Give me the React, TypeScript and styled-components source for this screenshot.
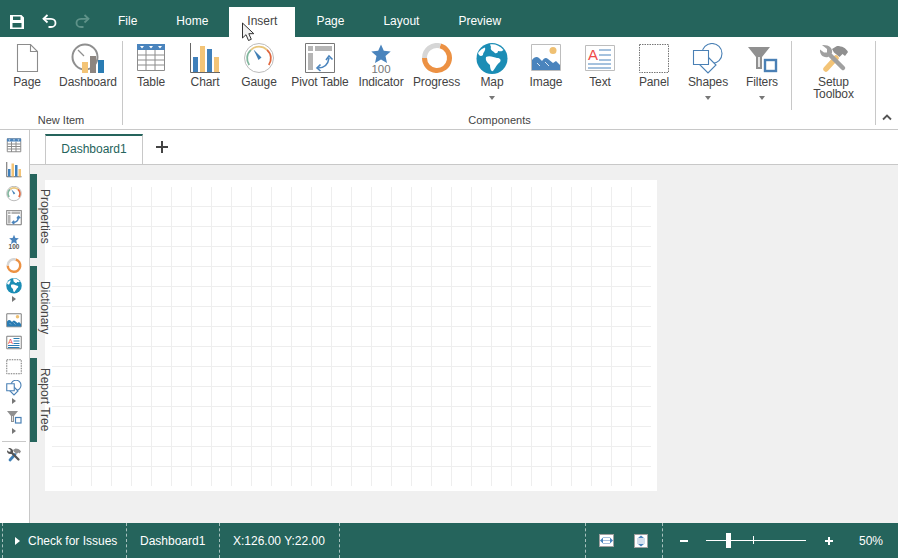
import React from 'react'
import styled, { createGlobalStyle } from 'styled-components'

const teal = '#25645c'
const ink = '#444444'
const line = '#c8c8c8'
const blue = '#4a84bd'
const amber = '#f3c477'

const GlobalStyle = createGlobalStyle`
  html, body, #root {
    margin: 0;
    height: 100%;
  }
  body {
    font-family: "Liberation Sans", Arial, sans-serif;
    font-size: 12px;
    color: ${ink};
    background: #fff;
    overflow: hidden;
  }
`

const Shell = styled.div`
  position: relative;
  display: flex;
  flex-direction: column;
  height: 558px;
  width: 898px;
`

/* title bar */
const TopBar = styled.header`
  display: flex;
  align-items: flex-end;
  height: 37px;
  background: ${teal};
  flex: none;
`
const QuickButton = styled.div`
  display: flex;
  align-items: center;
  justify-content: center;
  width: 33px;
  height: 30px;
  padding-bottom: 1px;
  box-sizing: border-box;
`
const Tabs = styled.nav`
  display: flex;
  gap: 3px;
  margin-left: 1px;
`
const TopTab = styled.div<{ $active?: boolean }>`
  height: 30px;
  line-height: 28px;
  padding: 0 18px;
  color: ${({ $active }) => ($active ? ink : '#fff')};
  background: ${({ $active }) => ($active ? '#fff' : 'transparent')};
`

/* ribbon */
const Ribbon = styled.section`
  display: flex;
  height: 93px;
  box-sizing: border-box;
  padding-top: 4px;
  border-bottom: 1px solid ${line};
  flex: none;
`
const Group = styled.div<{ $width: number; $inset?: number }>`
  width: ${({ $width }) => $width}px;
  height: 84px;
  box-sizing: border-box;
  padding-left: ${({ $inset }) => $inset ?? 0}px;
  border-right: 1px solid ${line};
  flex: none;
`
const GroupRow = styled.div`
  display: flex;
  height: 69px;
`
const GroupLabel = styled.div`
  margin-top: 4px;
  font-size: 11px;
  line-height: 12px;
  text-align: center;
`
const RibbonButton = styled.div<{ $width: number }>`
  display: flex;
  flex-direction: column;
  align-items: center;
  width: ${({ $width }) => $width}px;
  padding-top: 2px;
  box-sizing: border-box;
  flex: none;
`
const ButtonLabel = styled.div`
  margin-top: 1px;
  line-height: 12px;
  letter-spacing: -0.1px;
  text-align: center;
  white-space: nowrap;
`
const DownArrow = styled.div`
  margin-top: 8px;
  border-left: 3.5px solid transparent;
  border-right: 3.5px solid transparent;
  border-top: 4px solid #777;
`
const RowDivider = styled.div`
  width: 1px;
  margin-left: 2px;
  background: ${line};
  flex: none;
`
const Collapse = styled.div`
  flex: 1;
  display: flex;
  align-items: flex-end;
  justify-content: center;
  height: 84px;
  padding-bottom: 4px;
  box-sizing: border-box;
`

/* body */
const Body = styled.div`
  display: flex;
  flex: 1;
  min-height: 0;
`
const ToolBar = styled.aside`
  width: 30px;
  box-sizing: border-box;
  padding: 4px 1px 0 0;
  border-right: 1px solid ${line};
  display: flex;
  flex-direction: column;
  align-items: center;
  flex: none;
`
const ToolItem = styled.div<{ $h: number; $mt?: number }>`
  display: flex;
  align-items: center;
  justify-content: center;
  height: ${({ $h }) => $h}px;
  margin-top: ${({ $mt }) => $mt ?? 0}px;
  flex: none;
`
const SideArrow = styled.div`
  border-top: 3.5px solid transparent;
  border-bottom: 3.5px solid transparent;
  border-left: 4px solid #777;
`
const ToolDivider = styled.div`
  align-self: stretch;
  height: 1px;
  margin: 5px 2px;
  background: ${line};
`
const Workspace = styled.main`
  flex: 1;
  display: flex;
  flex-direction: column;
  min-width: 0;
`
const SheetBar = styled.div`
  display: flex;
  align-items: flex-end;
  height: 35px;
  box-sizing: border-box;
  padding-left: 15px;
  border-bottom: 1px solid ${line};
  flex: none;
`
const SheetTab = styled.div`
  width: 98px;
  height: 30px;
  box-sizing: border-box;
  border-top: 2px solid ${teal};
  border-left: 1px solid ${line};
  border-right: 1px solid ${line};
  color: ${teal};
  text-align: center;
  line-height: 26px;
`
const AddSheet = styled.div`
  display: flex;
  align-items: center;
  justify-content: center;
  width: 38px;
  height: 30px;
  padding-bottom: 4px;
  box-sizing: border-box;
`
const Stage = styled.div`
  position: relative;
  flex: 1;
  background: #f0f0f0;
  padding: 15px 0 0 15px;
`
const SideTabs = styled.div`
  position: absolute;
  left: 0;
  top: 9px;
  display: flex;
  flex-direction: column;
  gap: 8px;
`
const SideTab = styled.div`
  display: flex;
  align-items: center;
  justify-content: center;
  height: 84px;
  width: 22px;
  box-sizing: border-box;
  border-left: 7px solid ${teal};
  writing-mode: vertical-rl;
  line-height: 14px;
  white-space: nowrap;
`
const Sheet = styled.div`
  width: 612px;
  height: 311px;
  box-sizing: border-box;
  padding: 7px 0 0 7px;
  background: #fff;
`
const Grid = styled.div`
  width: 599px;
  height: 299px;
  background-image: linear-gradient(to right, transparent 19px, #eeeeee 19px),
    linear-gradient(to bottom, transparent 19px, #eeeeee 19px);
  background-size: 20px 20px;
`

/* status bar */
const StatusBar = styled.footer`
  display: flex;
  height: 35px;
  padding-left: 2px;
  background: ${teal};
  color: #fff;
  flex: none;
`
const Cell = styled.div<{ $width: number }>`
  display: flex;
  align-items: center;
  width: ${({ $width }) => $width}px;
  box-sizing: border-box;
  padding-left: 13px;
  border-left: 1px dashed rgba(255, 255, 255, 0.6);
  white-space: nowrap;
  flex: none;
`
const IssueCell = styled(Cell)`
  padding-left: 12px;
`
const IssueArrow = styled.div`
  margin-right: 8px;
  border-top: 4.5px solid transparent;
  border-bottom: 4.5px solid transparent;
  border-left: 5px solid #fff;
`
const FitCell = styled(Cell)`
  gap: 20px;
`
const ZoomArea = styled.div`
  flex: 1;
  display: flex;
  align-items: center;
  border-left: 1px dashed rgba(255, 255, 255, 0.6);
  padding-left: 17px;
`
const Minus = styled.div`
  width: 8px;
  height: 2px;
  background: #fff;
`
const Plus = styled.div`
  position: relative;
  width: 8px;
  height: 2px;
  margin-left: 19px;
  background: #fff;
  &::after {
    content: '';
    position: absolute;
    left: 3px;
    top: -3px;
    width: 2px;
    height: 8px;
    background: #fff;
  }
`
const Slider = styled.div`
  position: relative;
  width: 100px;
  height: 1px;
  margin-left: 18px;
  background: #fff;
`
const Thumb = styled.div`
  position: absolute;
  left: 20px;
  top: -7px;
  width: 5px;
  height: 15px;
  background: #fff;
`
const Tick = styled.div`
  position: absolute;
  left: 47px;
  top: -4px;
  width: 1px;
  height: 8px;
  background: #fff;
`
const Percent = styled.div`
  margin-left: 26px;
`
const Cursor = styled.svg`
  position: absolute;
  left: 241px;
  top: 22px;
`

type IconProps = { size?: number }

const PageIcon = ({ size = 32 }: IconProps) => (
  <svg width={size} height={size} viewBox="0 0 32 32" fill="#fff" stroke="#8c8c8c" strokeWidth="1.1">
    <path d="M6.5 1.5h13l7 7v20h-20z" />
    <path d="M19.5 1.5v7h7" fill="none" />
  </svg>
)

const DashboardIcon = ({ size = 36 }: IconProps) => (
  <svg width={size} height={(size * 32) / 36} viewBox="0 0 36 32">
    <circle cx="15" cy="14" r="12.5" fill="#fff" stroke="#8f8f8f" strokeWidth="2" />
    <path d="M8 7l6 6" stroke="#8f8f8f" strokeWidth="1.2" />
    <rect x="12" y="19" width="6" height="11" fill={amber} />
    <rect x="20" y="13" width="6" height="17" fill="#8c8580" />
    <rect x="28" y="17" width="6" height="13" fill="#2a7cb3" />
  </svg>
)

const TableIcon = ({ size = 32 }: IconProps) => (
  <svg width={size} height={size} viewBox="0 0 32 32">
    <rect x="2.5" y="1.5" width="27" height="26" fill="#fff" stroke="#8c8c8c" vectorEffect="non-scaling-stroke" />
    <path
      d="M2.5 12h27M2.5 17h27M2.5 22h27M11 7v21M20 7v21"
      stroke="#8c8c8c"
      fill="none"
      vectorEffect="non-scaling-stroke"
    />
    <rect x="2" y="1" width="28" height="6" fill={blue} />
    <path d="M5 3h4l-2 2.5zM14 3h4l-2 2.5zM23 3h4l-2 2.5z" fill="#fff" />
  </svg>
)

const ChartIcon = ({ size = 32 }: IconProps) => (
  <svg width={size} height={size} viewBox="0 0 32 32">
    <path d="M1.5 0v29.5H31" fill="none" stroke="#666" vectorEffect="non-scaling-stroke" />
    <rect x="4" y="14" width="5" height="15" fill="#3f80bb" />
    <rect x="11" y="3" width="5" height="26" fill={amber} />
    <rect x="18" y="6" width="5" height="23" fill="#3f80bb" />
    <rect x="25" y="14" width="5" height="15" fill={amber} />
  </svg>
)

const GaugeIcon = ({ size = 32 }: IconProps) => (
  <svg width={size} height={size} viewBox="0 0 32 32" fill="none">
    <circle cx="16" cy="15" r="14.5" fill="#fff" stroke="#bcbcbc" vectorEffect="non-scaling-stroke" />
    <path d="M6.2 22A11.5 11.5 0 0 1 8 6.8" stroke="#7fb59c" strokeWidth="1.8" vectorEffect="non-scaling-stroke" />
    <path d="M8 6.8A11.5 11.5 0 0 1 24 6.8" stroke="#e8c67c" strokeWidth="1.8" vectorEffect="non-scaling-stroke" />
    <path d="M24 6.8A11.5 11.5 0 0 1 25.8 22" stroke="#e0663d" strokeWidth="1.8" vectorEffect="non-scaling-stroke" />
    <path d="M10.5 6.5L18.5 14.5L15.5 17z" fill="#3f7fb5" />
  </svg>
)

const PivotIcon = ({ size = 32 }: IconProps) => (
  <svg width={size} height={size} viewBox="0 0 32 32" fill="none">
    <rect x="1.5" y="0.5" width="29" height="29" fill="#fff" stroke="#777" vectorEffect="non-scaling-stroke" />
    <rect x="4" y="3" width="5" height="5" fill="#b5b5b5" />
    <rect x="11" y="3" width="17" height="5" fill="#b5b5b5" />
    <rect x="4" y="10" width="5" height="17" fill="#b5b5b5" />
    <path d="M14 25c6 0 10-3 11-10" stroke={blue} strokeWidth="1.6" vectorEffect="non-scaling-stroke" />
    <path d="M16.5 21.5L13 25l3.5 3M22 17l3-4 3.5 3.5" stroke={blue} strokeWidth="1.6" vectorEffect="non-scaling-stroke" />
  </svg>
)

const IndicatorIcon = ({ size = 32 }: IconProps) => (
  <svg width={size} height={size} viewBox="0 0 32 32">
    <path d="M16 1.5l2.8 6.3 6.9.7-5.2 4.6 1.5 6.8-6-3.5-6 3.5 1.5-6.8-5.2-4.6 6.9-.7z" fill={blue} />
    <text
      x="16"
      y="30"
      textAnchor="middle"
      fontSize={size < 20 ? 13 : 11.5}
      fontWeight={size < 20 ? 700 : 400}
      fill={size < 20 ? '#555' : '#777'}
      fontFamily="Liberation Sans, Arial, sans-serif"
    >
      100
    </text>
  </svg>
)

const ProgressIcon = ({ size = 32 }: IconProps) => (
  <svg width={size} height={size} viewBox="0 0 32 32" fill="none" strokeWidth="5">
    <path d="M19.2 2.9A12.5 12.5 0 1 1 3.5 15" stroke="#ec9143" />
    <path d="M3.5 15A12.5 12.5 0 0 1 19.2 2.9" stroke="#d6d6d6" />
  </svg>
)

const MapIcon = ({ size = 32 }: IconProps) => (
  <svg width={size} height={size} viewBox="0 0 32 32">
    <circle cx="16" cy="15.5" r="15.5" fill="#1b8db5" />
    <g fill="#fff">
      <path d="M14 1.5C18 0.5 24 2.5 27.5 7C25.5 9 24 8 22 8C22 10.5 19 11 18 9C16 8 14 6 15 4z" />
      <path d="M10 14C13 12 18 14 21 15C24 15 25.5 17 24 19C21 21 20 24 17 28C15 29 14 25 14 22C12 20 9 18 10 14z" />
      <path d="M2 10C4 7 7 5 9 4.5C10 8 7 9 7 12C5 14 3 13 2 10z" />
    </g>
  </svg>
)

const ImageIcon = ({ size = 32 }: IconProps) => (
  <svg width={size} height={size} viewBox="0 0 32 32">
    <rect
      x="1.5"
      y="1.5"
      width="29"
      height="26"
      fill="#fff"
      stroke={size < 20 ? '#808080' : '#bdbdbd'}
      vectorEffect="non-scaling-stroke"
    />
    <circle cx="23" cy="7.5" r="3.5" fill="#efc072" />
    <path d="M2 27V17c2-3 5-4 7-2 1 1 2 2 3 3 2-3 4-4 6-2l5 4 3-2 4 4v5z" fill={size < 20 ? '#2a7cb3' : blue} />
    <path d="M7 20l3 3M15 19l4 4" stroke="#fff" strokeWidth="0.8" />
  </svg>
)

const TextIcon = ({ size = 32 }: IconProps) => (
  <svg width={size} height={size} viewBox="0 0 32 32">
    <rect
      x="1.5"
      y="2.5"
      width="29"
      height="25"
      fill="#fff"
      stroke={size < 20 ? '#808080' : '#bdbdbd'}
      vectorEffect="non-scaling-stroke"
    />
    <text x="4" y="17" fontSize="15" fill="#ee4a4a" fontFamily="Liberation Sans, Arial, sans-serif">
      A
    </text>
    <path
      d="M15 7h12M15 12h12M15 17h12M4 21h23M4 25h23"
      stroke={size < 20 ? '#2a7cb3' : blue}
      fill="none"
      vectorEffect="non-scaling-stroke"
    />
  </svg>
)

const PanelIcon = ({ size = 32 }: IconProps) => (
  <svg width={size} height={size} viewBox="0 0 32 32">
    <rect
      x="1.5"
      y="1.5"
      width="29"
      height="28"
      fill="#fff"
      stroke="#777"
      strokeDasharray="1.5 1"
      vectorEffect="non-scaling-stroke"
    />
  </svg>
)

const ShapesIcon = ({ size = 32 }: IconProps) => (
  <svg width={size} height={size} viewBox="0 0 32 32" fill="#fff" stroke="#4a80b5" strokeWidth="1.1">
    <circle cx="20" cy="10.5" r="10" vectorEffect="non-scaling-stroke" />
    <path d="M16 14l8 8-8 8-8-8z" vectorEffect="non-scaling-stroke" />
    <rect x="1.5" y="7.5" width="15" height="14" vectorEffect="non-scaling-stroke" />
  </svg>
)

const FiltersIcon = ({ size = 32 }: IconProps) => (
  <svg width={size} height={size} viewBox="0 0 32 32">
    <path d="M2 4h22l-8 10v12h-6V14z" fill="#909090" />
    <path d="M12 14h2v10h-2z" fill="#e4e4e4" />
    <rect x="19" y="17" width="11" height="11" fill="#fff" stroke="#4a80b5" strokeWidth="2.4" />
  </svg>
)

const ToolsIcon = ({
  size = 32,
  handle = amber,
  steel = '#a0a0a0',
}: IconProps & { handle?: string; steel?: string }) => (
  <svg width={size} height={size} viewBox="0 0 32 32" fill="none">
    <path d="M8 26l10-11" stroke={handle} strokeWidth="5.5" strokeLinecap="round" />
    <path d="M11 11l14 14" stroke={steel} strokeWidth="4.5" strokeLinecap="round" />
    <path d="M4 2l5 4v3.500H6L2 6.500c-0.500 5 3 8.500 8 7.500l4-4c1-5-3-8.500-10-8z" fill={steel} />
    <path d="M14 6l5-3c5 0 9 2 11 6l-3 4-2.500-2-3 3-5.500-4.500z" fill="#8f8f8f" />
  </svg>
)

const SaveIcon = () => (
  <svg width="14" height="14" viewBox="0 0 14 14">
    <path fillRule="evenodd" d="M0 0h11.500L14 2.500V14H0zM3 1.500V5h7.500V1.500zM2.500 8v4.500h9V8z" fill="#fff" />
  </svg>
)

const UndoIcon = ({ color }: { color: string }) => (
  <svg width="15" height="15" viewBox="0 0 15 15" fill="none" stroke={color} strokeWidth="1.8">
    <path d="M5.500 1L1.500 4.800 5.500 8.500" />
    <path d="M1.500 4.800H9c6 0 6 8.200 0 8.200H6.500" />
  </svg>
)

const RedoIcon = ({ color }: { color: string }) => (
  <svg width="15" height="15" viewBox="0 0 15 15" fill="none" stroke={color} strokeWidth="1.8">
    <path d="M9.500 1l4 3.800-4 3.700" />
    <path d="M13.500 4.800H6c-6 0-6 8.200 0 8.200h2.500" />
  </svg>
)

const FitWidthIcon = () => (
  <svg width="15" height="13" viewBox="0 0 15 13">
    <rect x="0.5" y="0.5" width="14" height="12" fill="#fff" stroke="#a0a0a0" />
    <path d="M4 3.500h7M4 6.500h7M4 9.500h7" stroke="#a8c0dc" />
    <path d="M1 6.500l3-3v6zM14 6.500l-3-3v6z" fill={blue} />
  </svg>
)

const FitHeightIcon = () => (
  <svg width="14" height="14" viewBox="0 0 14 14">
    <rect x="0.5" y="0.5" width="13" height="13" fill="#fff" stroke="#a0a0a0" />
    <path d="M3 5h8M3 7h8M3 9h8" stroke="#a8c0dc" />
    <path d="M7 1.500l3 2.500H4zM7 12.500l3-2.500H4z" fill={blue} />
  </svg>
)

const ChevronUp = () => (
  <svg width="10" height="7" viewBox="0 0 10 7" fill="none" stroke="#555" strokeWidth="1.8">
    <path d="M1 5.500l4-4 4 4" />
  </svg>
)

const PlusIcon = () => (
  <svg width="12" height="12" viewBox="0 0 12 12" stroke="#444" strokeWidth="2">
    <path d="M6 0v12M0 6h12" />
  </svg>
)

const newItems = [
  { label: 'Page', icon: <PageIcon />, width: 54 },
  { label: 'Dashboard', icon: <DashboardIcon />, width: 68 },
]

const components = [
  { label: 'Table', icon: <TableIcon />, width: 54 },
  { label: 'Chart', icon: <ChartIcon />, width: 54 },
  { label: 'Gauge', icon: <GaugeIcon />, width: 54 },
  { label: 'Pivot Table', icon: <PivotIcon />, width: 68 },
  { label: 'Indicator', icon: <IndicatorIcon />, width: 54 },
  { label: 'Progress', icon: <ProgressIcon />, width: 57 },
  { label: 'Map', icon: <MapIcon />, width: 54, menu: true },
  { label: 'Image', icon: <ImageIcon />, width: 54 },
  { label: 'Text', icon: <TextIcon />, width: 54 },
  { label: 'Panel', icon: <PanelIcon />, width: 54 },
  { label: 'Shapes', icon: <ShapesIcon />, width: 54, menu: true },
  { label: 'Filters', icon: <FiltersIcon />, width: 54, menu: true },
]

const tools = [
  { icon: <TableIcon size={16} />, h: 24 },
  { icon: <ChartIcon size={16} />, h: 24 },
  { icon: <GaugeIcon size={16} />, h: 24 },
  { icon: <PivotIcon size={16} />, h: 24 },
  { icon: <IndicatorIcon size={16} />, h: 24 },
  { icon: <ProgressIcon size={16} />, h: 24 },
  { icon: <MapIcon size={16} />, h: 15 },
  { icon: <SideArrow />, h: 12 },
  { icon: <ImageIcon size={16} />, h: 23, mt: 4 },
  { icon: <TextIcon size={16} />, h: 21 },
  { icon: <PanelIcon size={16} />, h: 27 },
  { icon: <ShapesIcon size={16} />, h: 16 },
  { icon: <SideArrow />, h: 10 },
  { icon: <FiltersIcon size={16} />, h: 16, mt: 3 },
  { icon: <SideArrow />, h: 10, mt: 1 },
]

const App = () => (
  <Shell>
    <GlobalStyle />
    <TopBar>
      <QuickButton>
        <SaveIcon />
      </QuickButton>
      <QuickButton>
        <UndoIcon color="#fff" />
      </QuickButton>
      <QuickButton>
        <RedoIcon color="#5f9289" />
      </QuickButton>
      <Tabs>
        <TopTab>File</TopTab>
        <TopTab>Home</TopTab>
        <TopTab $active>Insert</TopTab>
        <TopTab>Page</TopTab>
        <TopTab>Layout</TopTab>
        <TopTab>Preview</TopTab>
      </Tabs>
    </TopBar>

    <Ribbon>
      <Group $width={123}>
        <GroupRow>
          {newItems.map((item) => (
            <RibbonButton key={item.label} $width={item.width}>
              {item.icon}
              <ButtonLabel>{item.label}</ButtonLabel>
            </RibbonButton>
          ))}
        </GroupRow>
        <GroupLabel>New Item</GroupLabel>
      </Group>
      <Group $width={753} $inset={1}>
        <GroupRow>
          {components.map((item) => (
            <RibbonButton key={item.label} $width={item.width}>
              {item.icon}
              <ButtonLabel>{item.label}</ButtonLabel>
              {item.menu && <DownArrow />}
            </RibbonButton>
          ))}
          <RowDivider />
          <RibbonButton $width={83}>
            <ToolsIcon />
            <ButtonLabel>
              Setup
              <br />
              Toolbox
            </ButtonLabel>
          </RibbonButton>
        </GroupRow>
        <GroupLabel>Components</GroupLabel>
      </Group>
      <Collapse>
        <ChevronUp />
      </Collapse>
    </Ribbon>

    <Body>
      <ToolBar>
        {tools.map((tool, i) => (
          <ToolItem key={i} $h={tool.h} $mt={tool.mt}>
            {tool.icon}
          </ToolItem>
        ))}
        <ToolDivider />
        <ToolItem $h={16}>
          <ToolsIcon size={16} handle="#3f7fb5" steel="#555" />
        </ToolItem>
      </ToolBar>
      <Workspace>
        <SheetBar>
          <SheetTab>Dashboard1</SheetTab>
          <AddSheet>
            <PlusIcon />
          </AddSheet>
        </SheetBar>
        <Stage>
          <Sheet>
            <Grid />
          </Sheet>
          <SideTabs>
            <SideTab>Properties</SideTab>
            <SideTab>Dictionary</SideTab>
            <SideTab>Report Tree</SideTab>
          </SideTabs>
        </Stage>
      </Workspace>
    </Body>

    <StatusBar>
      <IssueCell $width={124}>
        <IssueArrow />
        Check for Issues
      </IssueCell>
      <Cell $width={93}>Dashboard1</Cell>
      <Cell $width={120}>X:126.00 Y:22.00</Cell>
      <Cell $width={246} />
      <FitCell $width={77}>
        <FitWidthIcon />
        <FitHeightIcon />
      </FitCell>
      <ZoomArea>
        <Minus />
        <Slider>
          <Thumb />
          <Tick />
        </Slider>
        <Plus />
        <Percent>50%</Percent>
      </ZoomArea>
    </StatusBar>

    <Cursor width="14" height="20" viewBox="0 0 14 20">
      <path d="M1.500 1v15l3.500-3.300 2.500 5.800 2.800-1.200-2.500-5.600h5z" fill="#f2f2f2" stroke="#333" strokeWidth="1" />
    </Cursor>
  </Shell>
)

export default App
